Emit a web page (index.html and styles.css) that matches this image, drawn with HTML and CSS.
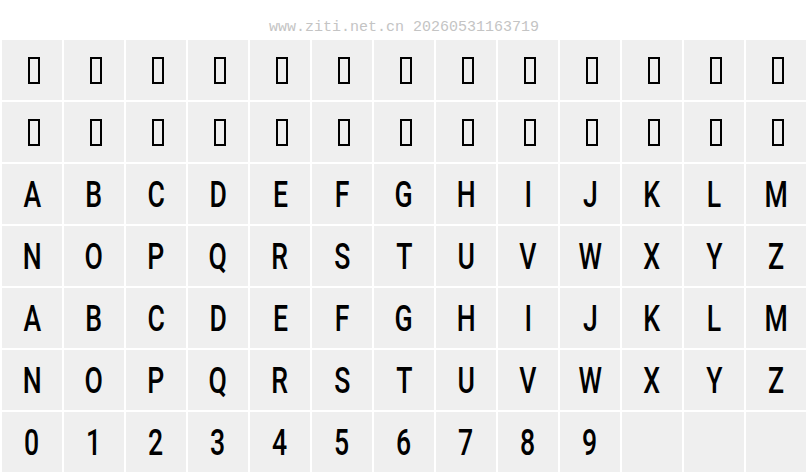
FILE: index.html
```html
<!DOCTYPE html>
<html lang="en">
<head>
  <meta charset="UTF-8">
  <title>Font preview</title>
  <link rel="stylesheet" href="styles.css">
</head>
<body>
  <div class="stamp">www.ziti.net.cn 20260531163719</div>

  <div class="grid" id="grid"></div>

  <script>
    // rows of the preview sheet, '#' = missing glyph box, '' = empty cell
    const rows = [
      '#############',
      '#############',
      'ABCDEFGHIJKLM',
      'NOPQRSTUVWXYZ',
      'ABCDEFGHIJKLM',
      'NOPQRSTUVWXYZ',
      '0123456789'
    ];
    const grid = document.getElementById('grid');

    rows.forEach(function (row) {
      for (let i = 0; i < 13; i++) {
        const cell = document.createElement('div');
        cell.className = 'cell';
        const ch = row[i];
        if (ch === '#') {
          const box = document.createElement('span');
          box.className = 'tofu';
          cell.appendChild(box);
        } else if (ch) {
          const glyph = document.createElement('span');
          glyph.className = 'glyph';
          glyph.textContent = ch;
          cell.appendChild(glyph);
        }
        grid.appendChild(cell);
      }
    });
  </script>
</body>
</html>
```

FILE: styles.css
```css
body {
  margin: 0;
  padding: 0;
  background-color: #ffffff;
  font-family: 'Liberation Mono', monospace;
}

.stamp {
  height: 40px;
  box-sizing: border-box;
  padding-top: 18px;
  line-height: 20px;
  font-size: 15px;
  color: #c4c4c4;
  text-align: center;
}

.grid {
  display: grid;
  grid-template-columns: repeat(13, 60px);
  grid-auto-rows: 60px;
  gap: 2px;
  padding-left: 2px;
}

.cell {
  background-color: #efefef;
  display: flex;
  align-items: center;
  justify-content: center;
}

.tofu {
  width: 8px;
  height: 23px;
  margin-left: 4px;
  border: 2px solid #000;
}

.glyph {
  display: inline-block;
  font-family: Roboto, sans-serif;
  font-weight: 500;
  font-size: 37px;
  line-height: 1;
  color: #000;
  transform: scaleX(0.72);
}
```
